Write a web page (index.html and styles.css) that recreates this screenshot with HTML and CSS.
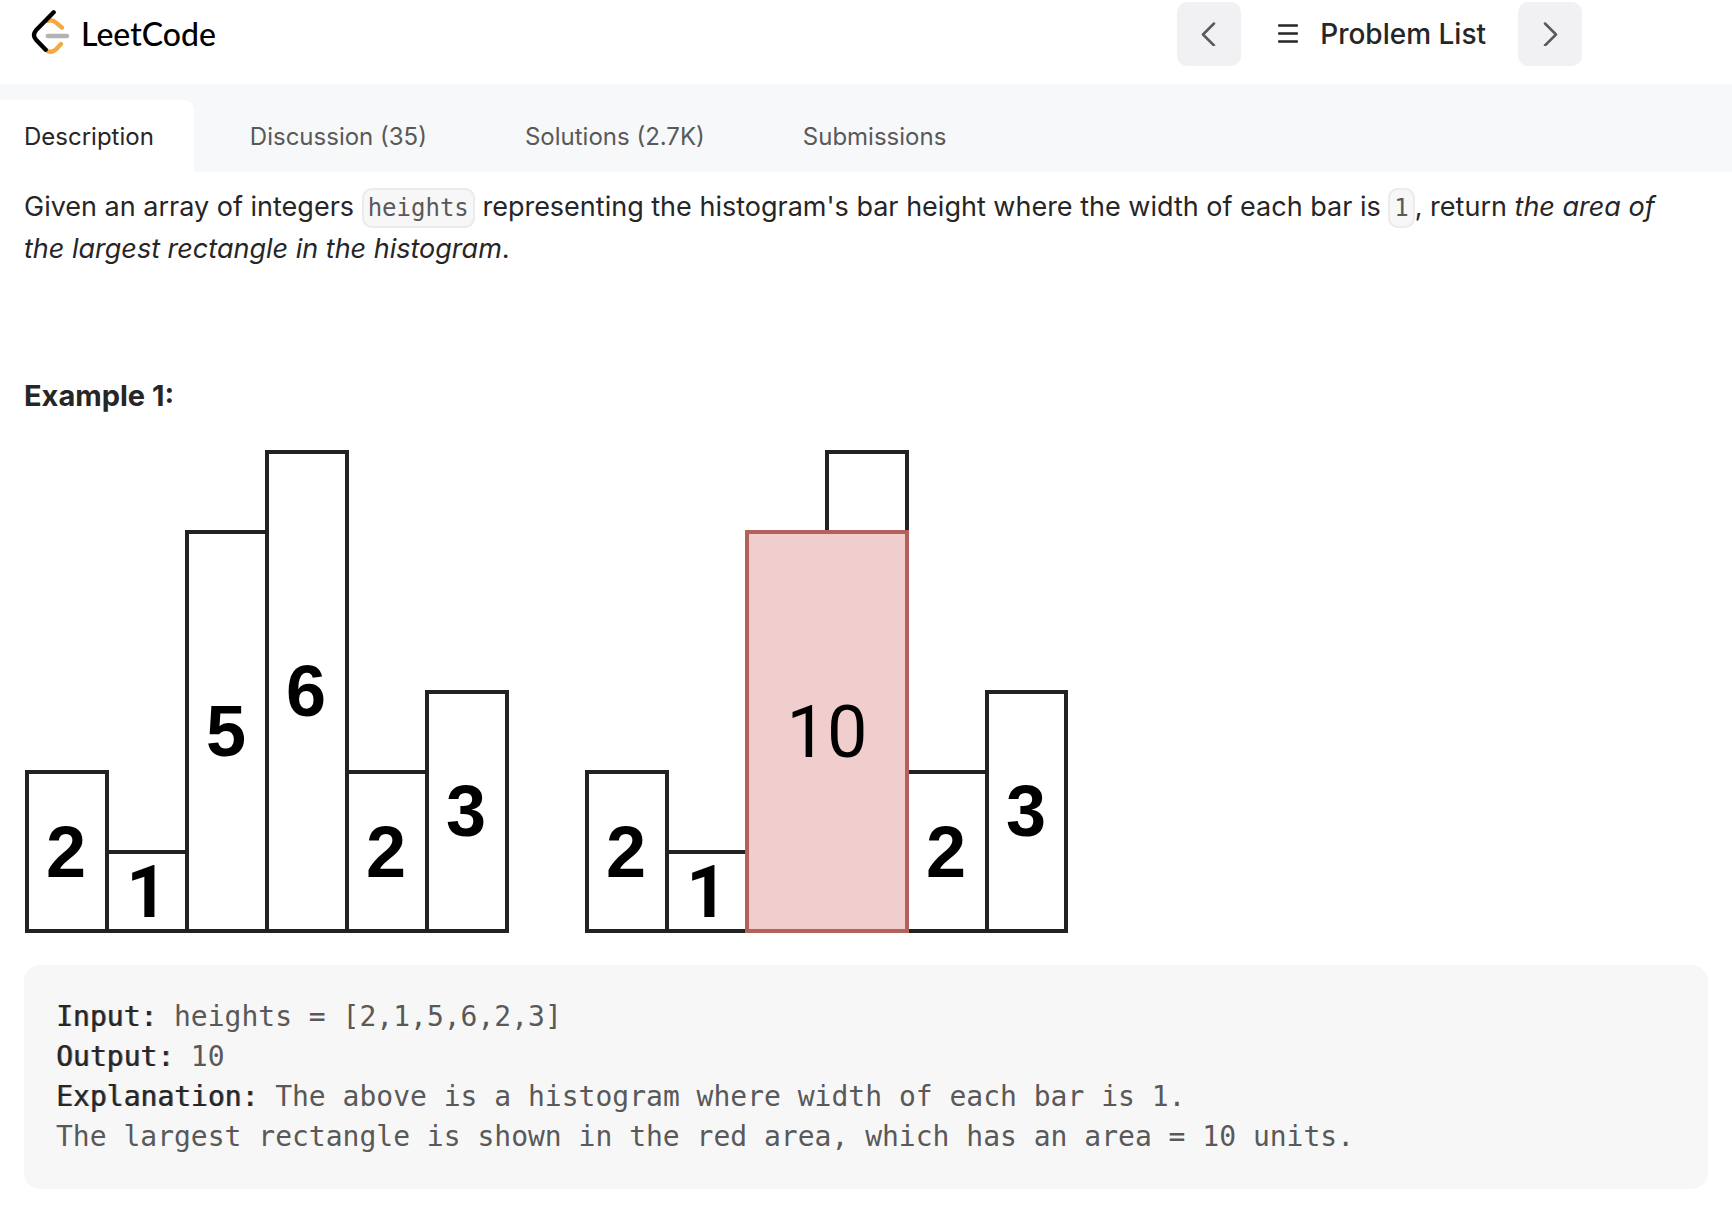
FILE: index.html
```html
<!DOCTYPE html>
<html lang="en">
<head>
<meta charset="utf-8">
<meta name="viewport" content="width=device-width, initial-scale=1">
<title>Largest Rectangle in Histogram - LeetCode</title>
<link rel="stylesheet" href="styles.css">
</head>
<body>
<header class="topbar">
  <a class="brand" href="#">
    <svg class="brand-mark" viewBox="93 27 117 138" fill="none" stroke-width="13" stroke-linecap="round" stroke-linejoin="round" aria-hidden="true">
      <path stroke="#f5a742" d="M143 63Q155 57 167 67L186 83"/>
      <path stroke="#f5a742" d="M137 149Q153 161 167 149L183 132"/>
      <path stroke="#b3b3b3" d="M143 108H201"/>
      <path stroke="#000" d="M161 37L108 91Q96 105 108 119L137 149"/>
    </svg>
    <span class="brand-name">LeetCode</span>
  </a>
  <nav class="pager" aria-label="Problems">
    <button class="pager-button" type="button" aria-label="Previous problem">
      <svg class="chevron" viewBox="0 0 48 48" aria-hidden="true"><path d="M34 3L12 25L34 47"/></svg>
    </button>
    <a class="pager-list" href="#">
      <svg class="list-icon" viewBox="0 0 40 40" aria-hidden="true"><path d="M2 3H38M2 19H38M2 35H38"/></svg>
      Problem List
    </a>
    <button class="pager-button" type="button" aria-label="Next problem">
      <svg class="chevron" viewBox="0 0 48 48" aria-hidden="true"><path d="M14 3L36 25L14 47"/></svg>
    </button>
  </nav>
</header>
<nav class="tabs" aria-label="Sections">
  <a class="tab tab-active" href="#" aria-current="page">Description</a>
  <a class="tab" href="#">Discussion (35)</a>
  <a class="tab" href="#">Solutions (2.7K)</a>
  <a class="tab" href="#">Submissions</a>
</nav>
<main class="problem">
  <p class="statement">Given an array of integers <code class="chip">heights</code> representing the histogram's bar height where the width of each bar is <code class="chip">1</code>, return <em>the area of the largest rectangle in the histogram</em>.</p>
  <h2 class="example-title">Example 1:</h2>
  <svg class="histogram" viewBox="0 0 1044 485" role="img" aria-label="Histogram with its largest rectangle in red">
    <g class="bars">
      <path d="M3 483V324H83V483M83 404H163M163 483V84H243M243 483V4H323V483M323 324H403M403 483V244H483V483M1 483H485"/>
      <path d="M563 483V324H643V483M643 404H723M803 84V4H883V84M883 324H963M963 483V244H1042V483M561 483H1044"/>
    </g>
    <rect class="area" x="723" y="84" width="160" height="399"/>
    <g class="numbers">
      <text x="42" y="429">2</text>
      <text class="one" x="123" y="469">1</text>
      <text x="202" y="308">5</text>
      <text x="282" y="268">6</text>
      <text x="362" y="429">2</text>
      <text x="442" y="388">3</text>
      <text x="602" y="429">2</text>
      <text class="one" x="683" y="469">1</text>
      <text x="922" y="429">2</text>
      <text x="1002" y="388">3</text>
      <text class="total" x="803" y="309">10</text>
    </g>
  </svg>
  <pre class="example"><strong>Input:</strong> heights = [2,1,5,6,2,3]
<strong>Output:</strong> 10
<strong>Explanation:</strong> The above is a histogram where width of each bar is 1.
The largest rectangle is shown in the red area, which has an area = 10 units.</pre>
</main>
</body>
</html>
```

FILE: styles.css
```css
* {
  box-sizing: border-box;
}

body {
  margin: 0;
  background: #fff;
  color: #262626;
  font-family: Inter, "Liberation Sans", sans-serif;
  font-size: 27px;
  line-height: 42px;
}

a {
  color: inherit;
  text-decoration: none;
}

.topbar {
  display: flex;
  align-items: flex-start;
  justify-content: space-between;
  height: 84px;
  padding: 2px 150px 0 31px;
}

.brand {
  display: flex;
  align-items: center;
  gap: 11px;
  height: 60px;
}

.brand-mark {
  width: 39px;
  height: 46px;
}

.brand-name {
  padding-top: 4px;
  color: #000;
  font-family: Lato, sans-serif;
  font-size: 32px;
  font-weight: 500;
}

.pager {
  display: flex;
  align-items: center;
  gap: 32px;
}

.pager-button {
  display: grid;
  place-items: center;
  width: 64px;
  height: 64px;
  padding: 0;
  border: 0;
  border-radius: 10px;
  background: #f1f1f3;
}

.chevron {
  width: 24px;
  height: 24px;
  fill: none;
  stroke: #595959;
  stroke-width: 5;
  stroke-linecap: round;
  stroke-linejoin: round;
}

.pager-list {
  display: flex;
  align-items: center;
  gap: 22px;
  padding: 0 0 0 5px;
  font-size: 28px;
  font-weight: 500;
}

.list-icon {
  width: 20px;
  height: 20px;
  fill: none;
  stroke: #262626;
  stroke-width: 5;
  stroke-linecap: round;
}

.tabs {
  display: flex;
  padding-top: 16px;
  background: #f7f8fa;
}

.tab {
  padding: 16px 42px 14px 56px;
  color: #595959;
  font-size: 24px;
}

.tab-active {
  padding-right: 40px;
  padding-left: 24px;
  border-top-right-radius: 10px;
  background: #fff;
  color: #262626;
}

.problem {
  padding: 14px 24px 34px;
}

.statement {
  margin: 0;
  padding-right: 24px;
}

.chip {
  padding: 4px;
  border: 2px solid #ebebeb;
  border-radius: 10px;
  background: #f7f7f7;
  color: #595959;
  font-family: "DejaVu Sans Mono", monospace;
  font-size: 24px;
  line-height: 28px;
}

.example-title {
  margin: 105px 0 31px;
  font-size: 29px;
  font-weight: 700;
}

.histogram {
  display: block;
  width: 1044px;
  max-width: 100%;
  overflow: visible;
}

.bars path {
  fill: none;
  stroke: #222;
  stroke-width: 4;
}

.area {
  fill: #f0cecd;
  stroke: #b4615d;
  stroke-width: 4;
}

.numbers {
  fill: #000;
  font-family: "Liberation Sans", sans-serif;
  font-size: 72px;
  font-weight: 700;
  text-anchor: middle;
}

.one {
  font-family: Roboto, sans-serif;
}

.total {
  font-family: Roboto, sans-serif;
  font-weight: 400;
}

.example {
  margin: 32px 0 0;
  padding: 32px;
  border-radius: 16px;
  background: #f7f7f7;
  color: #595959;
  font-family: "DejaVu Sans Mono", monospace;
  font-size: 28px;
  line-height: 40px;
  white-space: pre-wrap;
}

.example strong {
  color: #262626;
  font-weight: 400;
  text-shadow: 1px 0 rgba(38, 38, 38, 0.6);
}
```
